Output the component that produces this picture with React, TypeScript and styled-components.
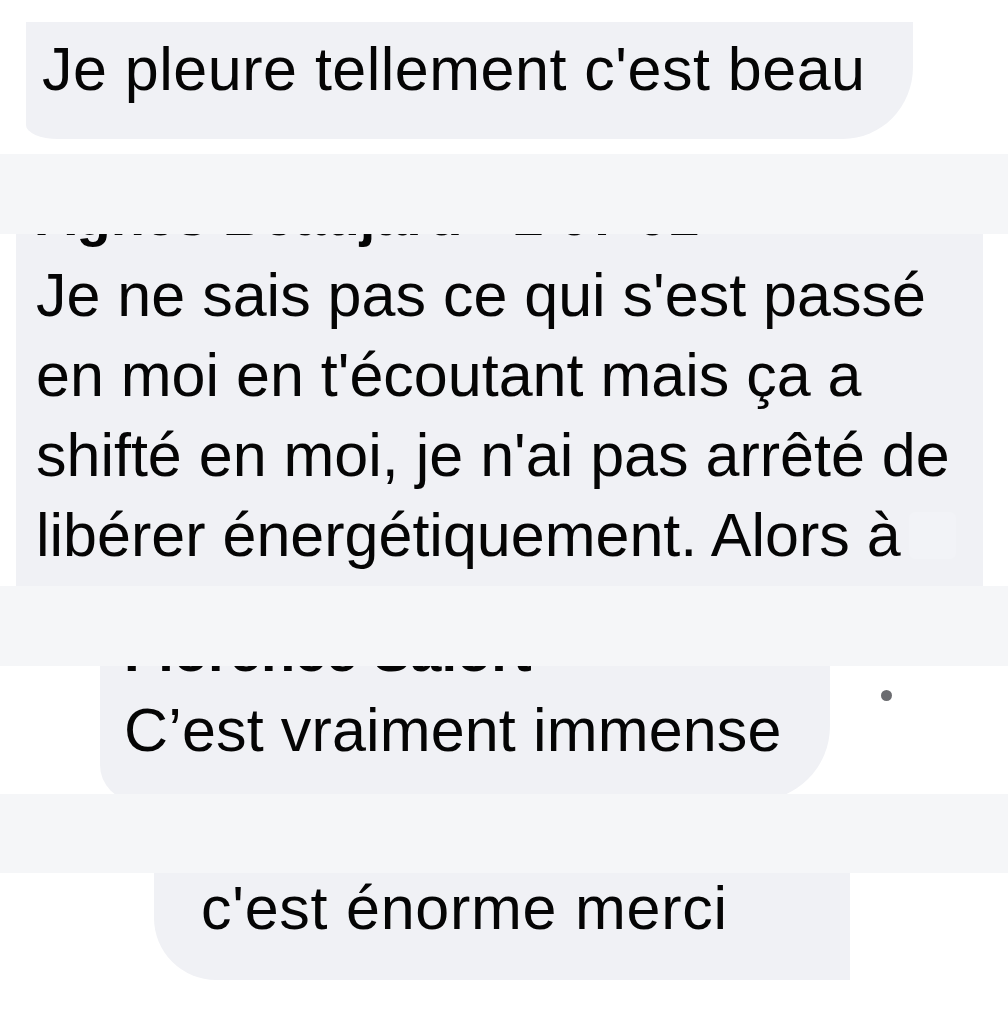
import styled, { createGlobalStyle } from 'styled-components';

const GlobalStyle = createGlobalStyle`
  html, body {
    margin: 0;
    padding: 0;
    background: #ffffff;
  }
  body {
    font-family: 'Liberation Sans', Arial, sans-serif;
    color: #050505;
  }
  *, *::before, *::after {
    box-sizing: border-box;
  }
`;

const Page = styled.main`
  width: 1008px;
  height: 1010px;
  display: flex;
  flex-direction: column;
  overflow: hidden;
  background: #ffffff;
`;

const Strip = styled.div<{ $h: number }>`
  flex: none;
  height: ${(p) => p.$h}px;
  background: #f5f6f8;
`;

const Slice = styled.section<{ $h?: number; $pt?: number; $pl: number }>`
  flex: ${(p) => (p.$h ? 'none' : '1')};
  height: ${(p) => (p.$h ? `${p.$h}px` : 'auto')};
  padding: ${(p) => p.$pt ?? 0}px 0 0 ${(p) => p.$pl}px;
  display: flex;
  align-items: flex-start;
  overflow: hidden;
`;

const Bubble = styled.div<{ $w: number; $h: string; $radius: string; $pad: string }>`
  flex: none;
  width: ${(p) => p.$w}px;
  height: ${(p) => p.$h};
  padding: ${(p) => p.$pad};
  background: #f0f1f5;
  border-radius: ${(p) => p.$radius};
  display: flex;
  flex-direction: column;
`;

const Author = styled.div<{ $top: number; $lh: number }>`
  margin-top: ${(p) => p.$top}px;
  font-size: 56px;
  font-weight: 700;
  line-height: ${(p) => p.$lh}px;
  white-space: nowrap;
`;

const Line = styled.div<{ $lh: number; $tracking?: number }>`
  font-size: 61px;
  line-height: ${(p) => p.$lh}px;
  letter-spacing: ${(p) => p.$tracking ?? 0}px;
  white-space: nowrap;
  display: flex;
  align-items: center;
`;

const Emoji = styled.span`
  display: inline-block;
  width: 47px;
  height: 47px;
  margin-left: 8px;
  border-radius: 6px;
  background: #f2f3f7;
`;

const Dot = styled.span`
  flex: none;
  width: 11px;
  height: 11px;
  margin: 24px 0 0 51px;
  border-radius: 50%;
  background: #6b6c70;
`;

const longComment = [
  "Je ne sais pas ce qui s'est passé",
  "en moi en t'écoutant mais ça a",
  "shifté en moi, je n'ai pas arrêté de",
];

export default function App() {
  return (
    <>
      <GlobalStyle />
      <Page>
        <Slice $h={154} $pt={22} $pl={26}>
          <Bubble $w={887} $h="117px" $radius="0 0 70px 32px / 0 0 72px 14px" $pad="12px 0 0 16px">
            <Line $lh={70} $tracking={0.5}>Je pleure tellement c'est beau</Line>
          </Bubble>
        </Slice>

        <Strip $h={80} />

        <Slice $h={352} $pl={16}>
          <Bubble $w={967} $h="100%" $radius="0" $pad="0 0 0 20px">
            <Author $top={-57} $lh={78}>Agnès Beaujard · 1 07 01</Author>
            {longComment.map((text) => (
              <Line key={text} $lh={80}>{text}</Line>
            ))}
            <Line $lh={80}>
              libérer énergétiquement. Alors à
              <Emoji />
            </Line>
          </Bubble>
        </Slice>

        <Strip $h={80} />

        <Slice $h={128} $pl={100}>
          <Bubble $w={730} $h="135px" $radius="0 0 75px 36px" $pad="0 0 0 24px">
            <Author $top={-52} $lh={76}>Florence Salort</Author>
            <Line $lh={80} $tracking={0.15}>C’est vraiment immense</Line>
          </Bubble>
          <Dot />
        </Slice>

        <Strip $h={79} />

        <Slice $pl={154}>
          <Bubble $w={696} $h="107px" $radius="0 0 0 62px" $pad="0 0 0 47px">
            <Line $lh={70} $tracking={0.75}>c'est énorme merci</Line>
          </Bubble>
        </Slice>
      </Page>
    </>
  );
}
